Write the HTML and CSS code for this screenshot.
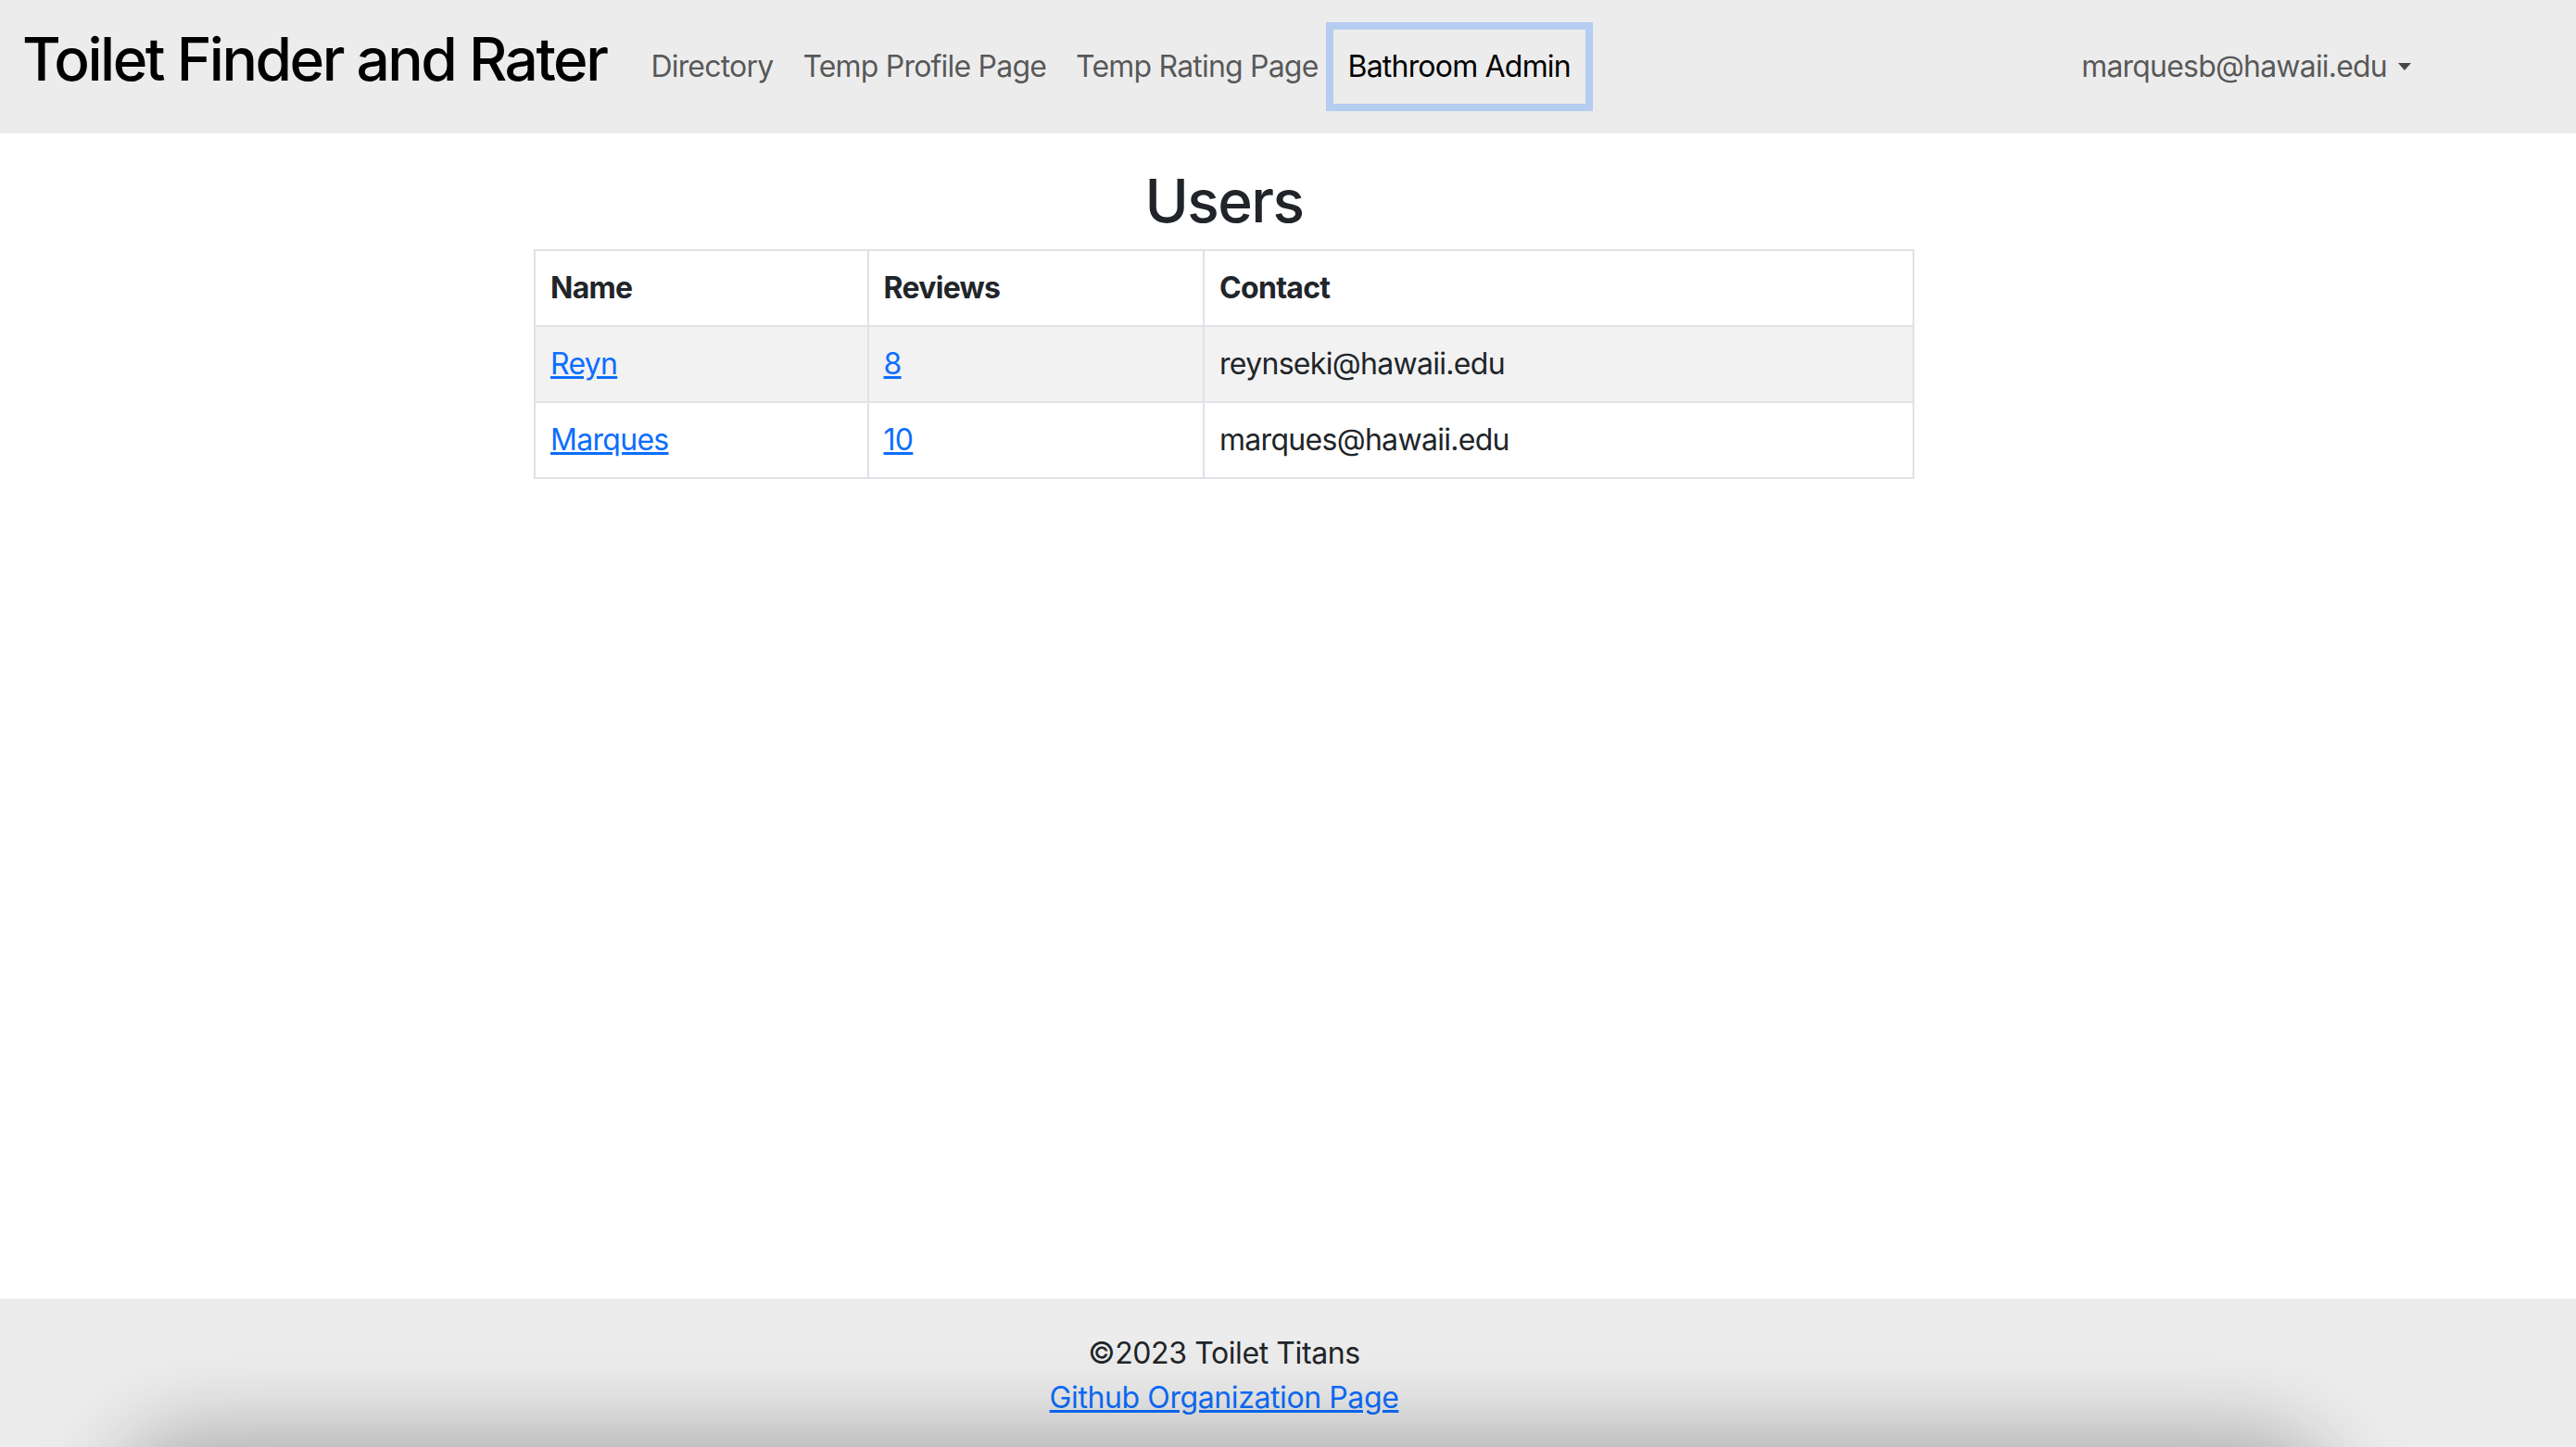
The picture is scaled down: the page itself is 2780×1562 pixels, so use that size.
FILE: index.html
```html
<!DOCTYPE html>
<html lang="en">
<head>
<meta charset="utf-8">
<title>Toilet Finder and Rater</title>
<link rel="stylesheet" href="styles.css">
</head>
<body>
<div class="page">
  <nav class="navbar">
    <div class="nav-inner">
      <a class="brand" href="#">Toilet Finder and Rater</a>
      <ul class="nav-links">
        <li><a class="nav-link" href="#">Directory</a></li>
        <li><a class="nav-link" href="#">Temp Profile Page</a></li>
        <li><a class="nav-link" href="#">Temp Rating Page</a></li>
        <li><a class="nav-link active" href="#">Bathroom Admin</a></li>
      </ul>
      <div class="nav-right">
        <a class="nav-link dropdown-toggle" href="#">marquesb@hawaii.edu<span class="caret"></span></a>
      </div>
    </div>
  </nav>

  <main class="main">
    <div class="main-inner">
      <h2 class="title">Users</h2>
      <table class="users">
        <colgroup>
          <col class="c-name">
          <col class="c-reviews">
          <col class="c-contact">
        </colgroup>
        <thead>
          <tr><th>Name</th><th>Reviews</th><th>Contact</th></tr>
        </thead>
        <tbody>
          <tr class="striped"><td><a href="#">Reyn</a></td><td><a href="#">8</a></td><td>reynseki@hawaii.edu</td></tr>
          <tr><td><a href="#">Marques</a></td><td><a href="#">10</a></td><td>marques@hawaii.edu</td></tr>
        </tbody>
      </table>
    </div>
  </main>

  <footer class="footer">
    <div class="footer-inner">
      <div>©2023 Toilet Titans</div>
      <a href="#">Github Organization Page</a>
    </div>
  </footer>

  <div class="bottom-shadow"></div>
</div>
</body>
</html>
```

FILE: styles.css
```css
* { box-sizing: border-box; }

html, body {
  margin: 0;
  padding: 0;
}

body {
  font-family: Inter, "Noto Sans", "Liberation Sans", sans-serif;
  font-size: 32px;
  line-height: 48px;
  color: #212529;
  background: #ffffff;
}

a { color: #0d6efd; }

.page {
  position: relative;
  min-height: 1562px;
  height: 1562px;
  overflow: hidden;
  display: flex;
  flex-direction: column;
}

/* Navbar */
.navbar {
  background: #ececec;
}

.nav-inner {
  width: 2642px;
  padding: 32px 24px;
  display: flex;
  align-items: center;
}

.brand {
  font-size: 64px;
  line-height: 80px;
  font-weight: 500;
  letter-spacing: -2.5px;
  color: #000;
  text-decoration: none;
  margin-right: 32px;
  margin-top: -16px;
}

.nav-links {
  list-style: none;
  margin: 0;
  padding: 0;
  display: flex;
}

.nav-link {
  display: block;
  padding: 16px 16px;
  color: rgba(0, 0, 0, 0.65);
  text-decoration: none;
  letter-spacing: -0.8px;
}

.nav-link.active {
  color: #000;
  box-shadow: 0 0 0 8px rgba(13, 110, 253, 0.25);
}

.nav-right {
  margin-left: auto;
}

.dropdown-toggle {
  display: flex;
  align-items: center;
}

.caret {
  display: inline-block;
  width: 0;
  height: 0;
  margin-left: 12px;
  border-top: 8px solid rgba(0, 0, 0, 0.7);
  border-left: 7px solid transparent;
  border-right: 7px solid transparent;
}

/* Main */
.main {
  flex: 1;
}

.main-inner {
  width: 2642px;
  padding-top: 32px;
}

.title {
  margin: 0 0 16px;
  font-size: 64px;
  line-height: 1.2;
  font-weight: 500;
  text-align: center;
  color: #212529;
  letter-spacing: -1.5px;
  position: relative;
  top: 3px;
}

.users {
  width: 1490px;
  margin: 0 auto;
  border-collapse: collapse;
  border: 2px solid #dee2e6;
}

.c-name { width: 360px; }
.c-reviews { width: 363px; }
.c-contact { width: 767px; }

.users th,
.users td {
  padding: 16px;
  border: 2px solid #dee2e6;
  text-align: left;
  vertical-align: top;
  letter-spacing: -0.7px;
}

.users th {
  font-weight: 700;
}

.users tr.striped td {
  background: #f2f2f2;
}

/* Footer */
.footer {
  background: #ececec;
}

.footer-inner {
  width: 2642px;
  padding: 35px 0 29px;
  text-align: center;
  letter-spacing: -0.4px;
}

.footer-inner a {
  display: inline-block;
}

.bottom-shadow {
  position: absolute;
  left: 150px;
  width: 2340px;
  top: 1575px;
  height: 120px;
  border-radius: 60px;
  box-shadow: 0 0 90px 30px rgba(0, 0, 0, 0.28);
  pointer-events: none;
}
```
